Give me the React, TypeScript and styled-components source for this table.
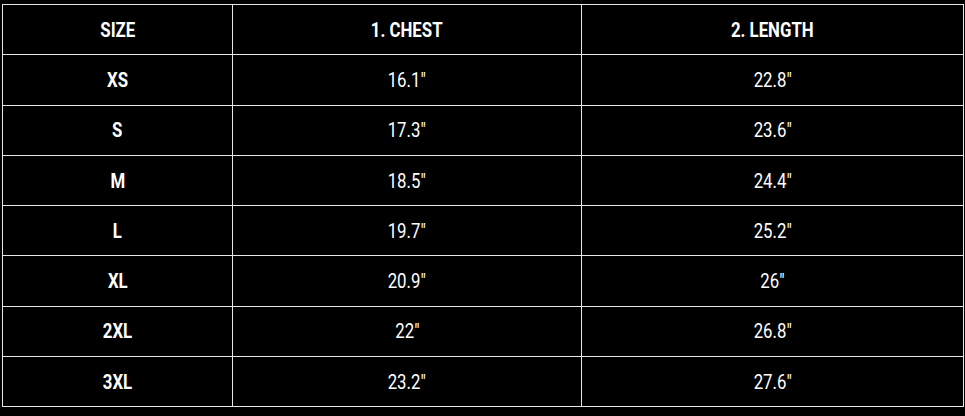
import styled, { createGlobalStyle } from "styled-components";

const GlobalStyle = createGlobalStyle`
  html, body {
    margin: 0;
    background: #000;
  }
  body {
    font-family: Roboto, "Liberation Sans", sans-serif;
    color: #fff;
  }
`;

const Wrapper = styled.div`
  padding: 4px 2px 0 2px;
  width: 961px;
`;

const Table = styled.table`
  width: 961px;
  border-collapse: collapse;
  table-layout: fixed;
  background: #000;
`;

const Col = styled.col<{ $w: number }>`
  width: ${(p) => p.$w}px;
`;

const Row = styled.tr`
  height: 50.3px;
`;

const Cell = styled.td<{ $bold?: boolean }>`
  border: 1px solid #e8e8e8;
  padding: 0;
  text-align: center;
  vertical-align: middle;
  font-size: 20px;
  font-weight: ${(p) => (p.$bold ? 700 : 400)};
  color: #fff;
`;

const Label = styled.span`
  display: inline-block;
  transform: scaleX(0.84);
  white-space: nowrap;
`;

const sizes = [
  { size: "XS", chest: '16.1"', length: '22.8"' },
  { size: "S", chest: '17.3"', length: '23.6"' },
  { size: "M", chest: '18.5"', length: '24.4"' },
  { size: "L", chest: '19.7"', length: '25.2"' },
  { size: "XL", chest: '20.9"', length: '26"' },
  { size: "2XL", chest: '22"', length: '26.8"' },
  { size: "3XL", chest: '23.2"', length: '27.6"' },
];

function App() {
  return (
    <>
      <GlobalStyle />
      <Wrapper>
        <Table>
          <colgroup>
            <Col $w={230} />
            <Col $w={349} />
            <Col $w={382} />
          </colgroup>
          <tbody>
            <Row>
              <Cell $bold><Label>SIZE</Label></Cell>
              <Cell $bold><Label>1. CHEST</Label></Cell>
              <Cell $bold><Label>2. LENGTH</Label></Cell>
            </Row>
            {sizes.map((s) => (
              <Row key={s.size}>
                <Cell $bold><Label>{s.size}</Label></Cell>
                <Cell><Label>{s.chest}</Label></Cell>
                <Cell><Label>{s.length}</Label></Cell>
              </Row>
            ))}
          </tbody>
        </Table>
      </Wrapper>
    </>
  );
}

export default App;
